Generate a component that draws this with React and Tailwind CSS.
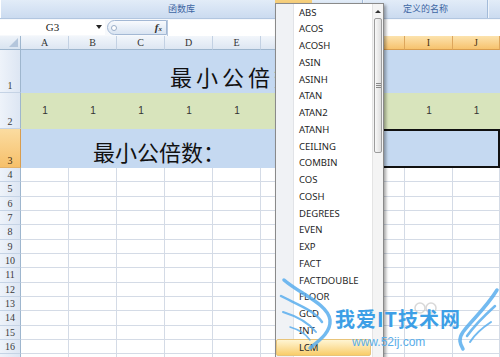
import React from 'react';

const COLS = ['A', 'B', 'C', 'D', 'E', 'F', 'G', 'H', 'I', 'J'];
const SEL = new Set(['G', 'H', 'I', 'J']);
const FUNCS = ['ABS', 'ACOS', 'ACOSH', 'ASIN', 'ASINH', 'ATAN', 'ATAN2', 'ATANH', 'CEILING', 'COMBIN', 'COS', 'COSH', 'DEGREES', 'EVEN', 'EXP', 'FACT', 'FACTDOUBLE', 'FLOOR', 'GCD', 'INT', 'LCM'];
const BODY = [14, 15, 14, 14, 15, 14, 14, 15, 14, 14, 15, 14, 14, 14];

function RowHead({ n, orange, tall }) {
  const base = "w-[21px] shrink-0 flex justify-center border-r border-b text-[10px] leading-none font-['Liberation_Serif',serif]";
  const align = tall ? ' items-end pb-[1px]' : ' items-center';
  const color = orange
    ? ' bg-gradient-to-b from-[#fbdca0] to-[#f6c06a] border-r-[#d99d4e] border-b-[#e3b26a] text-[#3a2a10]'
    : ' bg-gradient-to-r from-[#eef3fa] to-[#dde6f3] border-r-[#9eb6ce] border-b-[#c5d3e5] text-[#3a3a3a]';
  return <div className={base + align + color}>{n}</div>;
}

export default function App() {
  return (
    <div className="relative w-[500px] h-[357px] overflow-hidden bg-white font-['Noto_Sans','Noto_Sans_CJK_SC',sans-serif]">
      {/* Ribbon */}
      <div className="flex h-[19px] bg-gradient-to-b from-[#e2ecf8] to-[#cbdbf0] border-b border-[#b2c6e0]">
        <div className="w-[363px] shrink-0 flex items-center justify-center border-l border-l-white border-r border-r-[#a3bbd9] text-[9px] text-[#3d66a3] font-['Noto_Sans_CJK_SC',sans-serif]">函数库</div>
        <div className="w-[125px] shrink-0 flex items-center justify-center border-l border-l-[#eef4fb] border-r border-r-[#a3bbd9] text-[9px] text-[#3d66a3] font-['Noto_Sans_CJK_SC',sans-serif]">定义的名称</div>
        <div className="flex-1 border-l border-l-[#eef4fb]"></div>
      </div>

      {/* Formula bar */}
      <div className="flex h-[17px] items-center bg-[#f7f9fc]">
        <div className="relative w-[105px] h-[15px] flex items-center justify-center bg-white text-[11px] leading-none font-['Liberation_Serif',serif] text-[#222]">
          G3
          <span className="absolute right-[3px] top-[5px] w-0 h-0 border-l-[3px] border-r-[3px] border-t-[4px] border-l-transparent border-r-transparent border-t-[#222]"></span>
        </div>
        <div className="ml-[2px] w-[60px] h-[15px] rounded-l-full border border-[#a3b8d4] bg-gradient-to-b from-[#f8fafd] to-[#d9e4f2] flex items-center justify-between pl-[3px] pr-[4px]">
          <span className="w-[6px] h-[6px] rounded-full border border-[#9aaec8] bg-white"></span>
          <span className="italic font-bold font-['Liberation_Serif',serif] text-[11px] leading-none text-[#333]">f<span className="text-[7px]">x</span></span>
        </div>
        <div className="flex-1 h-[16px] bg-white border-l border-[#b8c9df]"></div>
      </div>

      {/* Column headers */}
      <div className="flex h-[14px]">
        <div className="w-[21px] shrink-0 relative bg-gradient-to-b from-[#eef3f9] to-[#d9e4f1] border-r border-b border-[#9eb6ce]">
          <svg className="absolute right-[2px] bottom-[2px]" width="9" height="9" viewBox="0 0 9 9">
            <polygon points="9,0 9,9 0,9" fill="#b4c6dc" />
          </svg>
        </div>
        {COLS.map((c, i) => (
          <div
            key={c}
            className={
              (i === 9 ? 'w-[47px]' : 'w-[48px]') +
              " shrink-0 flex items-center justify-center border-r border-b text-[10px] leading-none font-['Liberation_Serif',serif] " +
              (SEL.has(c)
                ? 'bg-gradient-to-b from-[#fce3ad] to-[#f6c26d] border-r-[#dda65c] border-b-[#d99d4e] text-[#4a3410]'
                : 'bg-gradient-to-b from-[#f2f6fb] to-[#dde6f2] border-r-[#c3d1e3] border-b-[#9eb6ce] text-[#333]')
            }
          >
            {c}
          </div>
        ))}
      </div>

      {/* Row 1 */}
      <div className="flex h-[43px]">
        <RowHead n="1" tall />
        <div className="flex-1 bg-[#c5d9f1] flex items-end pl-[149px] pb-[6px] text-[22px] tracking-[4px] leading-none text-[#111] font-['Noto_Sans_CJK_SC',sans-serif]">
          最小公倍数
        </div>
      </div>

      {/* Row 2 */}
      <div className="flex h-[36px]">
        <RowHead n="2" tall />
        <div className="flex-1 flex bg-[#d8e4bc]">
          {COLS.map((c, i) => (
            <div key={c} className={(i === 9 ? 'w-[47px]' : 'w-[48px]') + " shrink-0 flex items-center justify-center text-[10px] leading-none text-[#333] font-['Liberation_Sans',sans-serif]"}>
              1
            </div>
          ))}
        </div>
      </div>

      {/* Row 3 */}
      <div className="flex h-[39px]">
        <RowHead n="3" tall orange />
        <div className="w-[288px] shrink-0 bg-[#c5d9f1] flex items-end pb-[6px] pl-[72px] text-[22px] leading-none text-[#111] font-['Noto_Sans_CJK_SC',sans-serif]">
          最小公倍数：
        </div>
        <div className="flex-1 bg-[#c5d9f1] border-2 border-[#111]"></div>
      </div>

      {/* Body rows */}
      {BODY.map((h, r) => (
        <div key={r} className={'flex ' + (h === 15 ? 'h-[15px]' : 'h-[14px]')}>
          <RowHead n={r < 13 ? String(r + 4) : ''} />
          {COLS.map((c, i) => (
            <div key={c} className={(i === 9 ? 'w-[47px]' : 'w-[48px]') + ' shrink-0 border-r border-b border-[#d4dbe6]'}></div>
          ))}
        </div>
      ))}

      {/* Highlighted ribbon button above menu */}
      <div className="absolute left-[275px] top-0 w-[37px] h-[3px] bg-[#f6cf7c]"></div>

      {/* Dropdown menu */}
      <div className="absolute left-[275px] top-[3px] w-[109px] h-[360px] bg-white border border-[#8a8a8a] shadow-[2px_2px_3px_rgba(0,0,0,0.35)]">
        <div className="absolute left-0 top-0 bottom-0 w-[18px] bg-[#f0f2f5] border-r border-[#e1e3e7]"></div>
        <div className="relative flex flex-col">
          {FUNCS.map((f) =>
            f === 'LCM' ? (
              <div key={f} className="h-[16.75px] w-[95px] flex items-center pl-[22px] text-[9.5px] leading-none text-[#1f1f1f] bg-gradient-to-b from-[#fff5d2] to-[#f8cd68] border border-[#e8c47a] rounded-[2px]">
                {f}
              </div>
            ) : (
              <div key={f} className="h-[16.75px] flex items-center pl-[23px] text-[9.5px] leading-none text-[#1f1f1f]">
                {f}
              </div>
            )
          )}
        </div>
        {/* Scrollbar */}
        <div className="absolute right-0 top-0 w-[11px] h-full bg-[#f4f4f4] border-l border-[#e4e4e4]">
          <div className="h-[14px] flex items-center justify-center">
            <span className="w-0 h-0 border-l-[3px] border-r-[3px] border-b-[3px] border-l-transparent border-r-transparent border-b-[#333]"></span>
          </div>
          <div className="mx-[1px] h-[135px] rounded-[2px] border border-[#9c9c9c] bg-gradient-to-r from-[#f8f8f8] to-[#dedede] flex flex-col items-center justify-center gap-[1px]">
            <span className="w-[5px] h-[1px] bg-[#8a8a8a]"></span>
            <span className="w-[5px] h-[1px] bg-[#8a8a8a]"></span>
            <span className="w-[5px] h-[1px] bg-[#8a8a8a]"></span>
          </div>
        </div>
      </div>

      {/* Watermark */}
      <svg className="absolute left-[270px] top-[270px] pointer-events-none" width="230" height="87" viewBox="0 0 230 87">
        <g fill="none" stroke="#5aaeee" strokeLinecap="round" opacity="0.85">
          <path d="M14 10 C 30 24, 58 34, 60 50 C 61 62, 50 70, 40 78" strokeWidth="3.5" />
          <path d="M11 26 C 26 34, 44 40, 52 52" strokeWidth="2.5" />
          <path d="M13 42 C 26 46, 38 52, 46 62" strokeWidth="2" />
          <path d="M20 57 C 30 60, 36 64, 40 70" strokeWidth="1.5" />
          <path d="M227 20 C 216 38, 202 50, 193 62 C 188 69, 190 74, 193 79" strokeWidth="3.5" />
          <path d="M225 36 C 214 46, 204 56, 197 66" strokeWidth="2.5" />
          <path d="M221 52 C 212 58, 205 64, 200 72" strokeWidth="2" />
        </g>
        <g fill="none" stroke="#c8c8c8" strokeWidth="1.5" opacity="0.7">
          <circle cx="150" cy="38" r="5" />
          <circle cx="161" cy="38" r="5" />
        </g>
      </svg>
      <div className="absolute left-[335px] top-[309px] text-[20px] leading-none font-bold tracking-[1px] text-[#3d9fe6] font-['Noto_Sans_CJK_SC',sans-serif] pointer-events-none">
        我爱IT技术网
      </div>
      <div className="absolute left-[352px] top-[336px] text-[12px] leading-none text-[#5aaeea] font-['Liberation_Sans',sans-serif] pointer-events-none">
        www.52ij.com
      </div>
    </div>
  );
}
